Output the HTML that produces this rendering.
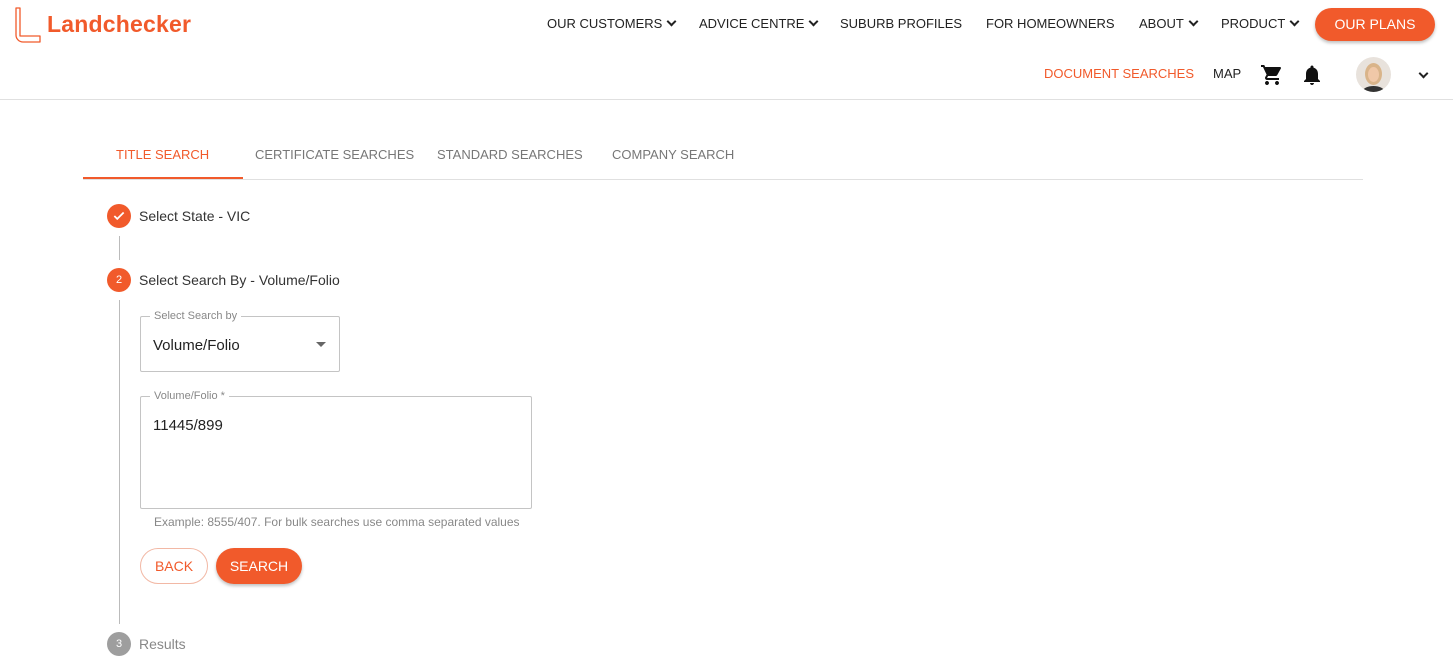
<!DOCTYPE html>
<html><head><meta charset="utf-8"><style>
*{box-sizing:border-box;margin:0;padding:0}
body{width:1453px;height:667px;overflow:hidden;background:#fff;font-family:"Liberation Sans",sans-serif;color:#333;position:relative}
.a{position:absolute;white-space:nowrap}
.nav{font-size:13px;color:#222;top:16px}
.chev{display:inline-block;width:7px;height:7px;border-right:2px solid #222;border-bottom:2px solid #222;transform:rotate(45deg);margin-left:6px;position:relative;top:-3px}
.tab{font-size:13px;color:#777;top:147px}
.or{color:#f15a2b}
.circ{position:absolute;width:24px;height:24px;border-radius:50%;color:#fff;font-size:11px;text-align:center;line-height:24px}
.step{font-size:14px;color:#333}
</style></head><body>
<svg class="a" style="left:14px;top:6px" width="30" height="37" viewBox="0 0 30 37"><path d="M2 2h4v28h20v6H9a7 7 0 0 1-7-7z" fill="none" stroke="#f15a2b" stroke-width="1.3" stroke-linejoin="round"/></svg>
<div class="a or" style="left:47px;top:11px;font-size:23px;font-weight:bold;letter-spacing:0.2px">Landchecker</div>
<div class="a nav" style="left:547px">OUR CUSTOMERS<span class="chev"></span></div>
<div class="a nav" style="left:699px">ADVICE CENTRE<span class="chev"></span></div>
<div class="a nav" style="left:840px">SUBURB PROFILES</div>
<div class="a nav" style="left:986px">FOR HOMEOWNERS</div>
<div class="a nav" style="left:1139px">ABOUT<span class="chev"></span></div>
<div class="a nav" style="left:1221px">PRODUCT<span class="chev"></span></div>
<div class="a" style="left:1315px;top:8px;width:120px;height:33px;border-radius:17px;background:#f15a2b;color:#fff;font-size:14px;text-align:center;line-height:33px;box-shadow:0 2px 3px rgba(0,0,0,.25)">OUR PLANS</div>
<div class="a or" style="left:1044px;top:66px;font-size:13px">DOCUMENT SEARCHES</div>
<div class="a" style="left:1213px;top:66px;font-size:13px;color:#222">MAP</div>
<svg class="a" style="left:1260px;top:63px" width="24" height="24" viewBox="0 0 24 24"><path d="M7 18c-1.1 0-2 .9-2 2s.9 2 2 2 2-.9 2-2-.9-2-2-2zM1 2v2h2l3.6 7.6-1.35 2.4C5.1 14.3 5 14.6 5 15c0 1.1.9 2 2 2h12v-2H7.4a.25.25 0 0 1-.25-.25l.03-.12.9-1.630h7.45c.75 0 1.41-.41 1.75-1.03l3.58-6.49A1 1 0 0 0 20 4H5.2l-.94-2zm16 16c-1.1 0-2 .9-2 2s.9 2 2 2 2-.9 2-2-.9-2-2-2z" fill="#111"/></svg>
<svg class="a" style="left:1300px;top:63px" width="24" height="24" viewBox="0 0 24 24"><path d="M12 22c1.1 0 2-.9 2-2h-4c0 1.1.9 2 2 2zm6-6v-5c0-3.07-1.64-5.640-4.5-6.32V4c0-.83-.67-1.5-1.5-1.5s-1.5.67-1.5 1.5v.68C7.63 5.36 6 7.92 6 11v5l-2 2v1h16v-1z" fill="#111"/></svg>
<div class="a" style="left:1356px;top:57px;width:35px;height:35px;border-radius:50%;background:#e8e2dc;overflow:hidden"><div style="position:absolute;left:9px;top:6px;width:17px;height:22px;border-radius:50%;background:#d9b48a"></div><div style="position:absolute;left:12px;top:10px;width:11px;height:15px;border-radius:50%;background:#f0c8a8"></div><div style="position:absolute;left:7px;top:29px;width:21px;height:10px;border-radius:50%;background:#333"></div></div>
<div class="a" style="left:1420px;top:67px"><span class="chev" style="margin:0"></span></div>
<div class="a" style="left:0;top:99px;width:1453px;height:1px;background:#e0e0e0"></div>
<div class="a tab or" style="left:116px">TITLE SEARCH</div>
<div class="a tab" style="left:255px">CERTIFICATE SEARCHES</div>
<div class="a tab" style="left:437px">STANDARD SEARCHES</div>
<div class="a tab" style="left:612px">COMPANY SEARCH</div>
<div class="a" style="left:83px;top:179px;width:1280px;height:1px;background:#e0e0e0"></div>
<div class="a" style="left:83px;top:177px;width:160px;height:2px;background:#f15a2b"></div>
<div class="circ" style="left:107px;top:204px;background:#f15a2b"><svg width="14" height="14" viewBox="0 0 24 24" style="margin-top:5px"><path d="M4 12l5 5L20 6" fill="none" stroke="#fff" stroke-width="3"/></svg></div>
<div class="a step" style="left:139px;top:208px">Select State - VIC</div>
<div class="a" style="left:119px;top:236px;width:1px;height:24px;background:#bbb"></div>
<div class="circ" style="left:107px;top:268px;background:#f15a2b">2</div>
<div class="a step" style="left:139px;top:272px">Select Search By - Volume/Folio</div>
<div class="a" style="left:119px;top:300px;width:1px;height:324px;background:#bbb"></div>
<div class="a" style="left:140px;top:316px;width:200px;height:56px;border:1px solid #c4c4c4;border-radius:2px"></div>
<div class="a" style="left:150px;top:310px;background:#fff;padding:0 4px;font-size:11px;color:#888">Select Search by</div>
<div class="a" style="left:153px;top:337px;font-size:15px;color:#222">Volume/Folio</div>
<div class="a" style="left:316px;top:342px;width:0;height:0;border-left:5px solid transparent;border-right:5px solid transparent;border-top:5px solid #666"></div>
<div class="a" style="left:140px;top:396px;width:392px;height:113px;border:1px solid #c4c4c4;border-radius:2px"></div>
<div class="a" style="left:150px;top:390px;background:#fff;padding:0 4px;font-size:11px;color:#888">Volume/Folio *</div>
<div class="a" style="left:153px;top:417px;font-size:15px;color:#222">11445/899</div>
<div class="a" style="left:154px;top:515px;font-size:12px;color:#888">Example: 8555/407. For bulk searches use comma separated values</div>
<div class="a or" style="left:140px;top:548px;width:68px;height:36px;border:1px solid #f2b8a5;border-radius:18px;text-align:center;line-height:34px;font-size:14px">BACK</div>
<div class="a" style="left:216px;top:548px;width:86px;height:36px;background:#f15a2b;border-radius:18px;text-align:center;line-height:36px;font-size:14px;color:#fff;box-shadow:0 2px 3px rgba(0,0,0,.25)">SEARCH</div>
<div class="circ" style="left:107px;top:632px;background:#9e9e9e">3</div>
<div class="a step" style="left:139px;top:636px;color:#888">Results</div>
</body></html>
